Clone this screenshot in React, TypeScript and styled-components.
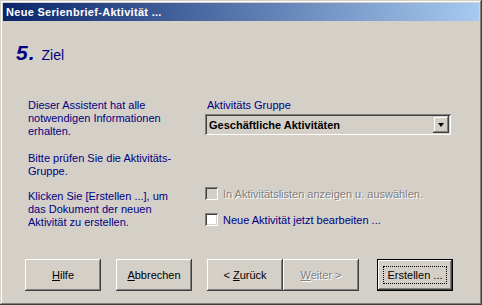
import React from "react";
import styled, { createGlobalStyle } from "styled-components";

const GlobalStyle = createGlobalStyle`
  html, body {
    margin: 0;
    padding: 0;
    background: #d4d0c8;
  }
  body {
    font-family: "Liberation Sans", Arial, sans-serif;
    font-size: 11px;
  }
`;

const Window = styled.div`
  width: 482px;
  height: 305px;
  box-sizing: border-box;
  display: flex;
  flex-direction: column;
  padding: 3px 3px 3px 3px;
  background: #d4d0c8;
  box-shadow: inset -1px -1px #404040, inset 1px 1px #d4d0c8,
    inset -2px -2px #808080, inset 2px 2px #ffffff;
`;

const TitleBar = styled.div`
  height: 18px;
  display: flex;
  align-items: center;
  padding-left: 3px;
  background: linear-gradient(to right, #0a246a, #a6caf0);
  color: #ffffff;
  font-weight: bold;
  font-size: 11px;
  letter-spacing: 0.3px;
`;

const Body = styled.div`
  flex: 1;
  display: flex;
  flex-direction: column;
  padding: 0 0 0 13px;
`;

const Heading = styled.div`
  display: flex;
  align-items: baseline;
  gap: 6px;
  margin-top: 20px;
  height: 20px;
  color: #000080;
`;

const StepNumber = styled.span`
  font-size: 21px;
  font-weight: bold;
  font-style: italic;
  letter-spacing: 1px;
`;

const StepTitle = styled.span`
  font-size: 14px;
`;

const Columns = styled.div`
  display: grid;
  grid-template-columns: 177px 246px;
  margin-top: 38px;
  padding-left: 12px;
`;

const LeftColumn = styled.div`
  display: flex;
  flex-direction: column;
`;

const Paragraph = styled.p<{ $top: number }>`
  margin: ${(p) => p.$top}px 0 0 0;
  color: #000080;
  line-height: 13px;
  font-size: 11px;
`;

const RightColumn = styled.div`
  display: flex;
  flex-direction: column;
`;

const FieldLabel = styled.div`
  color: #000080;
  line-height: 13px;
  padding-left: 2px;
`;

const Select = styled.div`
  margin-top: 2px;
  height: 21px;
  box-sizing: border-box;
  display: flex;
  align-items: center;
  justify-content: space-between;
  padding: 2px 2px 2px 4px;
  background: #d4d0c8;
  box-shadow: inset 1px 1px #808080, inset -1px -1px #ffffff,
    inset 2px 2px #404040, inset -2px -2px #d4d0c8;
  font-weight: bold;
  color: #000000;
`;

const DropButton = styled.div`
  width: 16px;
  height: 17px;
  box-sizing: border-box;
  display: flex;
  align-items: center;
  justify-content: center;
  background: #d4d0c8;
  box-shadow: inset -1px -1px #404040, inset 1px 1px #d4d0c8,
    inset -2px -2px #808080, inset 2px 2px #ffffff;
`;

const Arrow = styled.div`
  width: 0;
  height: 0;
  border-left: 3.5px solid transparent;
  border-right: 3.5px solid transparent;
  border-top: 4px solid #000000;
`;

const CheckRow = styled.label<{ $top: number; $disabled?: boolean }>`
  display: flex;
  align-items: center;
  gap: 5px;
  margin-top: ${(p) => p.$top}px;
  height: 13px;
  color: ${(p) => (p.$disabled ? "#808080" : "#000080")};
  text-shadow: ${(p) => (p.$disabled ? "1px 1px #ffffff" : "none")};
`;

const Box = styled.span<{ $disabled?: boolean }>`
  width: 13px;
  height: 13px;
  box-sizing: border-box;
  background: ${(p) => (p.$disabled ? "#d4d0c8" : "#ffffff")};
  box-shadow: inset 1px 1px #808080, inset -1px -1px #ffffff,
    inset 2px 2px #404040, inset -2px -2px #d4d0c8;
`;

const ButtonRow = styled.div`
  display: flex;
  margin-top: auto;
  margin-bottom: 11px;
  padding-left: 9px;
`;

const Button = styled.div<{ $gap?: number; $disabled?: boolean; $default?: boolean }>`
  width: 76px;
  height: 32px;
  box-sizing: border-box;
  margin-left: ${(p) => p.$gap ?? 0}px;
  display: flex;
  align-items: center;
  justify-content: center;
  color: ${(p) => (p.$disabled ? "#808080" : "#000000")};
  text-shadow: ${(p) => (p.$disabled ? "1px 1px #ffffff" : "none")};
  background: #d4d0c8;
  box-shadow: ${(p) =>
    p.$default
      ? "inset -1px -1px #000, inset 1px 1px #000, inset -2px -2px #404040, inset 2px 2px #fff, inset -3px -3px #808080"
      : "inset -1px -1px #404040, inset 1px 1px #ffffff, inset -2px -2px #808080, inset 2px 2px #d4d0c8"};
`;

const FocusRect = styled.span`
  padding: 2px 3px;
  outline: 1px dotted #000000;
`;

const Key = styled.u``;

export default function App() {
  return (
    <>
      <GlobalStyle />
      <Window>
        <TitleBar>Neue Serienbrief-Aktivität ...</TitleBar>
        <Body>
          <Heading>
            <StepNumber>5.</StepNumber>
            <StepTitle>Ziel</StepTitle>
          </Heading>
          <Columns>
            <LeftColumn>
              <Paragraph $top={0}>
                Dieser Assistent hat alle
                <br />
                notwendigen Informationen
                <br />
                erhalten.
              </Paragraph>
              <Paragraph $top={14}>
                Bitte prüfen Sie die Aktivitäts-
                <br />
                Gruppe.
              </Paragraph>
              <Paragraph $top={12}>
                Klicken Sie [Erstellen ...], um
                <br />
                das Dokument der neuen
                <br />
                Aktivität zu erstellen.
              </Paragraph>
            </LeftColumn>
            <RightColumn>
              <FieldLabel>Aktivitäts Gruppe</FieldLabel>
              <Select>
                Geschäftliche Aktivitäten
                <DropButton>
                  <Arrow />
                </DropButton>
              </Select>
              <CheckRow $top={52} $disabled>
                <Box $disabled />
                In Aktivitätslisten anzeigen u. auswählen.
              </CheckRow>
              <CheckRow $top={13}>
                <Box />
                Neue Aktivität jetzt bearbeiten ...
              </CheckRow>
            </RightColumn>
          </Columns>
          <ButtonRow>
            <Button>
              <span>
                <Key>H</Key>ilfe
              </span>
            </Button>
            <Button $gap={15}>
              <span>
                <Key>A</Key>bbrechen
              </span>
            </Button>
            <Button $gap={15}>
              <span>
                &lt; <Key>Z</Key>urück
              </span>
            </Button>
            <Button $disabled>
              <span>
                <Key>W</Key>eiter &gt;
              </span>
            </Button>
            <Button $gap={18} $default>
              <FocusRect>Erstellen ...</FocusRect>
            </Button>
          </ButtonRow>
        </Body>
      </Window>
    </>
  );
}
